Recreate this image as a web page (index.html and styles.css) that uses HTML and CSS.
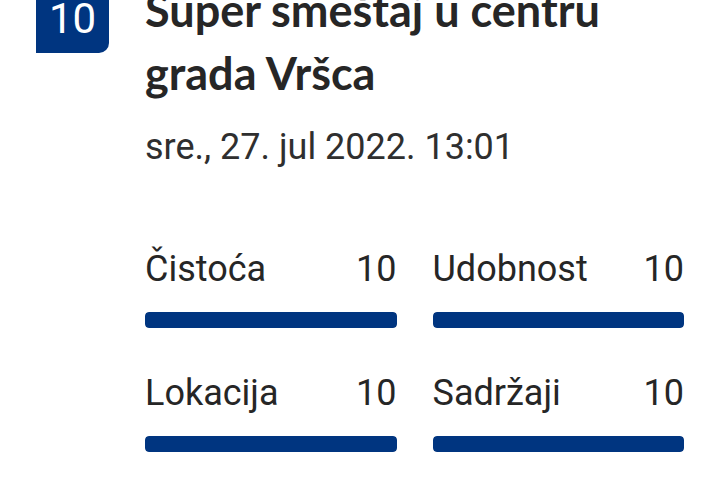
FILE: index.html
```html
<!DOCTYPE html>
<html lang="sr">
  <head>
    <meta charset="utf-8">
    <title>Recenzija</title>
    <link rel="stylesheet" href="styles.css">
  </head>
  <body>
    <article class="review">
      <div class="score-badge">10</div>
      <div class="review-body">
        <h1 class="review-title">Super smeštaj u centru grada Vršca</h1>
        <time class="review-date" datetime="2022-07-27T13:01">sre., 27. jul 2022. 13:01</time>

        <section class="subscores">
          <div class="subscore">
            <div class="subscore-head"><span>Čistoća</span><span>10</span></div>
            <div class="subscore-bar"><div class="subscore-fill" style="width: 100%"></div></div>
          </div>
          <div class="subscore">
            <div class="subscore-head"><span>Udobnost</span><span>10</span></div>
            <div class="subscore-bar"><div class="subscore-fill" style="width: 100%"></div></div>
          </div>
          <div class="subscore">
            <div class="subscore-head"><span>Lokacija</span><span>10</span></div>
            <div class="subscore-bar"><div class="subscore-fill" style="width: 100%"></div></div>
          </div>
          <div class="subscore">
            <div class="subscore-head"><span>Sadržaji</span><span>10</span></div>
            <div class="subscore-bar"><div class="subscore-fill" style="width: 100%"></div></div>
          </div>
        </section>
      </div>
    </article>
  </body>
</html>
```

FILE: styles.css
```css
:root {
  --brand-blue: #003580;
  --text: #262626;
  --text-soft: #2f2f2f;
  --bar-track: #e6e6e6;
}

body {
  margin: 0;
  background: #fff;
  font-family: Roboto, "Noto Sans", sans-serif;
  color: var(--text);
  overflow: hidden;
}

.review {
  display: flex;
  align-items: flex-start;
  gap: 36px;
  padding: 0 36px;
  margin-top: -21px;
}

/* score square, flat bottom-left corner */
.score-badge {
  flex: 0 0 73px;
  height: 74px;
  box-sizing: border-box;
  padding-bottom: 13px;
  display: flex;
  align-items: flex-end;
  justify-content: center;
  background: var(--brand-blue);
  border-radius: 10px 10px 10px 0;
  color: #fff;
  font-size: 42px;
  line-height: 1;
}

.review-body {
  flex: 1;
  min-width: 0;
}

.review-title {
  margin: 0;
  font-family: Lato, "Open Sans", sans-serif;
  font-weight: 700;
  font-size: 45px;
  line-height: 63px;
  color: var(--text);
}

.review-date {
  display: block;
  margin-top: 18px;
  font-size: 36px;
  line-height: 48px;
  color: var(--text-soft);
}

.subscores {
  display: grid;
  grid-template-columns: 1fr 1fr;
  column-gap: 36px;
  row-gap: 41px;
  margin-top: 74px;
}

.subscore-head {
  display: flex;
  justify-content: space-between;
  font-size: 36px;
  line-height: 48px;
}

.subscore-bar {
  margin-top: 19px;
  height: 16px;
  border-radius: 4px;
  background: var(--bar-track);
  overflow: hidden;
}
  .subscore-fill {
    height: 100%;
    background: var(--brand-blue);
    border-radius: 4px;
  }
```
